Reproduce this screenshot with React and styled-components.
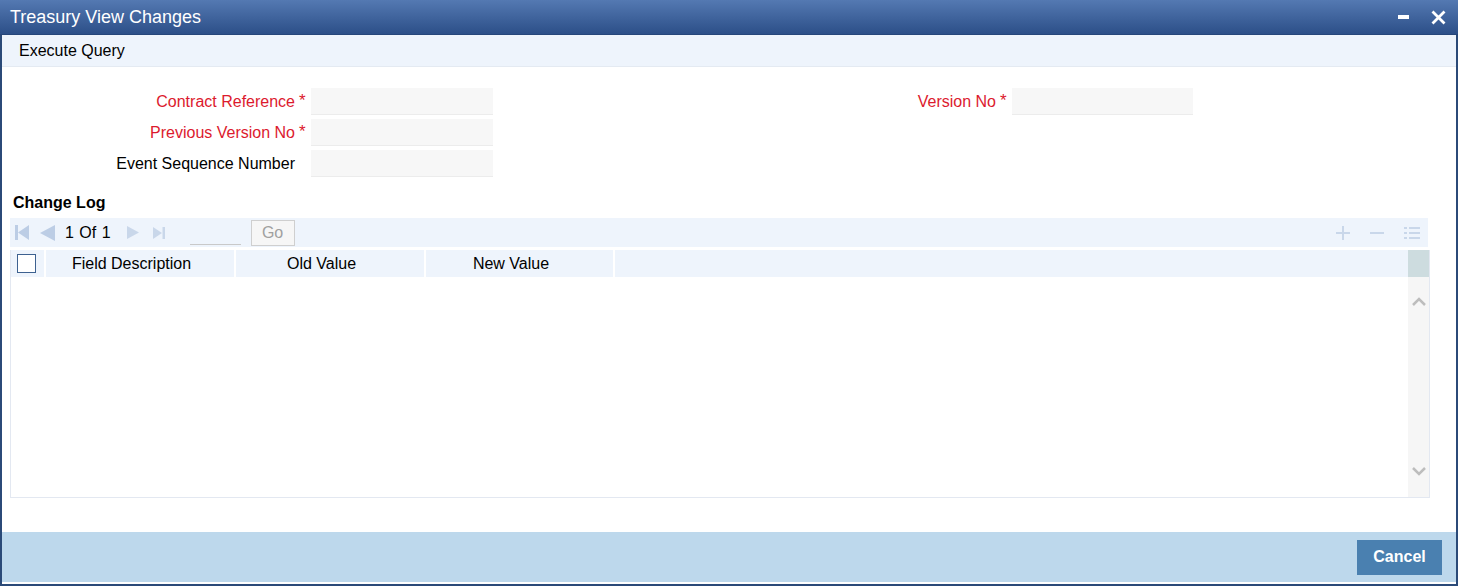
import React from 'react';
import styled, { createGlobalStyle } from 'styled-components';

const Global = createGlobalStyle`
  html, body { margin: 0; padding: 0; background: #fff; }
  body { font-family: "Liberation Sans", Arial, sans-serif; color: #000; }
  * { box-sizing: border-box; }
`;

const Window = styled.div`
  width: 1458px;
  height: 586px;
  display: flex;
  flex-direction: column;
  background: #fff;
`;

const TitleBar = styled.div`
  height: 35px;
  flex: none;
  display: flex;
  align-items: center;
  justify-content: space-between;
  padding: 0 12px 0 10px;
  background: linear-gradient(#5479b2, #2c4f88);
  border-bottom: 1px solid #26467a;
  color: #fff;
  font-size: 18px;
`;

const TitleControls = styled.div`
  display: flex;
  align-items: center;
  gap: 22px;
`;

const Frame = styled.div`
  flex: 1;
  display: flex;
  flex-direction: column;
  border-left: 2px solid #2b4a78;
  border-right: 2px solid #2b4a78;
  border-bottom: 2px solid #2b4a78;
  padding-bottom: 2px;
`;

const Toolbar = styled.div`
  height: 32px;
  flex: none;
  display: flex;
  align-items: center;
  padding-left: 17px;
  background: #eef4fc;
  border-bottom: 1px solid #e4eaf2;
  font-size: 16px;
`;

const Form = styled.div`
  display: grid;
  grid-template-columns: 305px 182px 511px 181px;
  grid-auto-rows: 27px;
  column-gap: 4px;
  row-gap: 4px;
  padding-top: 21px;
`;

const Label = styled.div`
  display: flex;
  align-items: center;
  justify-content: flex-end;
  font-size: 16px;
  color: ${p => (p.$required ? '#dc1a2e' : '#000')};
  white-space: nowrap;
`;

const Star = styled.span`
  display: inline-block;
  width: 12px;
  padding-left: 4px;
  color: #dc1a2e;
  font-size: 17px;
  position: relative;
  top: -1px;
`;

const Input = styled.div`
  background: #f7f7f7;
  border-bottom: 1px solid #ececec;
`;

const Section = styled.div`
  margin: 0 26px 0 8px;
  display: flex;
  flex-direction: column;
`;

const Heading = styled.div`
  margin: 16px 0 0 3px;
  height: 20px;
  line-height: 20px;
  font-size: 16px;
  font-weight: bold;
`;

const Pager = styled.div`
  margin: 5px 2px 0 0;
  height: 29px;
  display: flex;
  align-items: center;
  background: #eef4fc;
  padding-left: 5px;
  font-size: 16px;
`;

const PageText = styled.span`
  margin: 0 16px 0 10px;
  white-space: nowrap;
  word-spacing: 1px;
`;

const PageInput = styled.div`
  width: 51px;
  height: 25px;
  margin: 0 10px 0 25px;
  border-bottom: 1px solid #c9c9c9;
`;

const GoButton = styled.div`
  width: 44px;
  height: 26px;
  border: 1px solid #cfcfcf;
  background: #f6f6f6;
  color: #a0a0a0;
  font-size: 16px;
  display: flex;
  align-items: center;
  justify-content: center;
`;

const PagerActions = styled.div`
  margin-left: auto;
  display: flex;
  align-items: center;
  gap: 20px;
  padding-right: 8px;
`;

const Table = styled.div`
  margin-top: 3px;
  height: 248px;
  display: flex;
  border: 1px solid #e3e8f1;
  border-top: none;
`;

const TableMain = styled.div`
  flex: 1;
  display: flex;
  flex-direction: column;
`;

const HeaderRow = styled.div`
  height: 27px;
  display: grid;
  grid-template-columns: 33px 188px 188px 187px 1fr;
  column-gap: 2px;
  background: #fff;
`;

const HeaderCell = styled.div`
  background: #eef4fc;
  display: flex;
  align-items: center;
  justify-content: ${p => (p.$check ? 'flex-start' : 'center')};
  padding: ${p => (p.$check ? '0 0 0 6px' : '0 17px 0 0')};
  font-size: 16px;
  white-space: nowrap;
`;

const Checkbox = styled.div`
  width: 19px;
  height: 19px;
  border: 1px solid #3d6190;
  background: #fff;
`;

const TableBody = styled.div`
  flex: 1;
  background: #fff;
`;

const Scrollbar = styled.div`
  width: 21px;
  display: flex;
  flex-direction: column;
`;

const ScrollHead = styled.div`
  height: 27px;
  background: #cddcdf;
`;

const ScrollTrack = styled.div`
  flex: 1;
  background: #f6f6f6;
  display: flex;
  flex-direction: column;
  align-items: center;
  justify-content: space-between;
  padding: 20px 0 21px;
`;

const Footer = styled.div`
  margin-top: auto;
  height: 50px;
  flex: none;
  background: #bdd8ec;
  display: flex;
  align-items: center;
  justify-content: flex-end;
  padding-right: 14px;
`;

const CancelButton = styled.button`
  width: 85px;
  height: 35px;
  border: none;
  background: #4a80b0;
  color: #fff;
  font-family: "Liberation Sans", Arial, sans-serif;
  font-size: 16px;
  font-weight: bold;
  padding: 0;
`;

const Spacer = styled.span`
  display: inline-block;
  width: ${p => p.$w}px;
`;

const ICON = '#bccde5';
const ICON2 = '#c9d7ea';

const FirstIcon = () => (
  <svg width="14" height="15" viewBox="0 0 14 15">
    <rect x="0" y="0" width="3" height="15" fill={ICON} />
    <polygon points="14,0 14,15 3,7.5" fill={ICON} />
  </svg>
);
const PrevIcon = () => (
  <svg width="15" height="16" viewBox="0 0 15 16">
    <polygon points="15,0 15,16 0,8" fill={ICON} />
  </svg>
);
const NextIcon = () => (
  <svg width="12" height="13" viewBox="0 0 12 13">
    <polygon points="0,0 0,13 12,6.5" fill={ICON2} />
  </svg>
);
const LastIcon = () => (
  <svg width="12" height="12" viewBox="0 0 12 12">
    <polygon points="0,0 0,12 9,6" fill={ICON2} />
    <rect x="9.5" y="0" width="2.5" height="12" fill={ICON2} />
  </svg>
);

const PlusIcon = () => (
  <svg width="14" height="14" viewBox="0 0 14 14">
    <rect x="0" y="6" width="14" height="2" fill={ICON2} />
    <rect x="6" y="0" width="2" height="14" fill={ICON2} />
  </svg>
);
const MinusIcon = () => (
  <svg width="14" height="14" viewBox="0 0 14 14">
    <rect x="0" y="6" width="14" height="2" fill={ICON2} />
  </svg>
);
const ListIcon = () => (
  <svg width="16" height="14" viewBox="0 0 16 14">
    {[1, 6, 11].map(y => (
      <g key={y}>
        <rect x="0" y={y} width="3" height="2" fill={ICON2} />
        <rect x="5" y={y} width="11" height="2" fill={ICON2} />
      </g>
    ))}
  </svg>
);

const Chevron = ({ up }) => (
  <svg width="14" height="9" viewBox="0 0 14 9">
    <polyline
      points={up ? '1,8 7,2 13,8' : '1,1 7,7 13,1'}
      fill="none"
      stroke="#bdbdbd"
      strokeWidth="2.5"
    />
  </svg>
);

const MinimizeIcon = () => (
  <svg width="11" height="4" viewBox="0 0 11 4">
    <rect x="0" y="0" width="11" height="4" fill="#fff" />
  </svg>
);
const CloseIcon = () => (
  <svg width="15" height="15" viewBox="0 0 15 15">
    <path d="M1.5 1.5 L13.5 13.5 M13.5 1.5 L1.5 13.5" stroke="#fff" strokeWidth="2.8" />
  </svg>
);

const Field = ({ label, required }) => (
  <>
    <Label $required={required}>
      {label}
      <Star>{required ? '*' : ''}</Star>
    </Label>
    <Input />
  </>
);

export default function App() {
  return (
    <>
      <Global />
      <Window>
        <TitleBar>
          <span>Treasury View Changes</span>
          <TitleControls>
            <MinimizeIcon />
            <CloseIcon />
          </TitleControls>
        </TitleBar>
        <Frame>
          <Toolbar>Execute Query</Toolbar>
          <Form>
            <Field label="Contract Reference" required />
            <Field label="Version No" required />
            <Field label="Previous Version No" required />
            <div />
            <div />
            <Field label="Event Sequence Number" />
          </Form>
          <Section>
            <Heading>Change Log</Heading>
            <Pager>
              <FirstIcon />
              <Spacer $w={11} />
              <PrevIcon />
              <PageText>1 Of 1</PageText>
              <NextIcon />
              <Spacer $w={14} />
              <LastIcon />
              <PageInput />
              <GoButton>Go</GoButton>
              <PagerActions>
                <PlusIcon />
                <MinusIcon />
                <ListIcon />
              </PagerActions>
            </Pager>
            <Table>
              <TableMain>
                <HeaderRow>
                  <HeaderCell $check>
                    <Checkbox />
                  </HeaderCell>
                  <HeaderCell>Field Description</HeaderCell>
                  <HeaderCell>Old Value</HeaderCell>
                  <HeaderCell>New Value</HeaderCell>
                  <HeaderCell />
                </HeaderRow>
                <TableBody />
              </TableMain>
              <Scrollbar>
                <ScrollHead />
                <ScrollTrack>
                  <Chevron up />
                  <Chevron />
                </ScrollTrack>
              </Scrollbar>
            </Table>
          </Section>
          <Footer>
            <CancelButton>Cancel</CancelButton>
          </Footer>
        </Frame>
      </Window>
    </>
  );
}
